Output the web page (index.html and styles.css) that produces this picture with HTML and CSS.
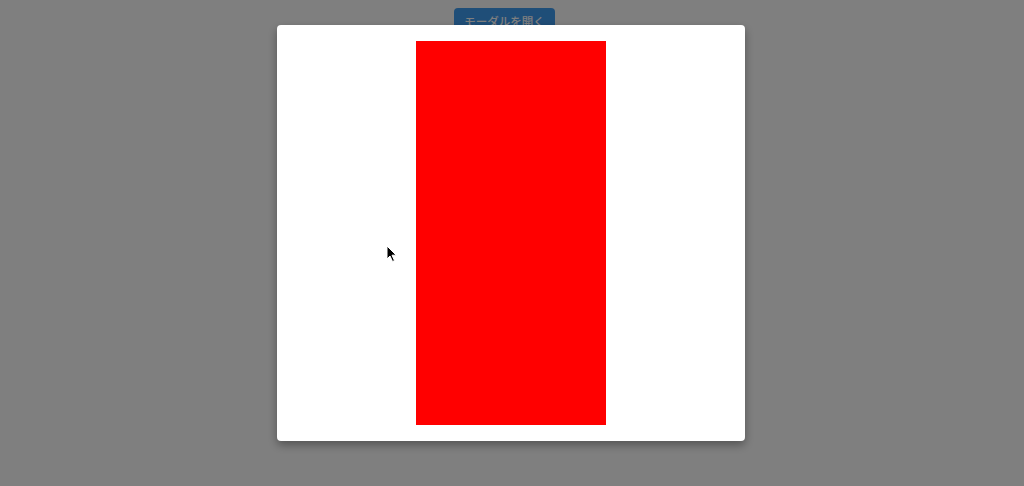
FILE: index.html
```html
<!DOCTYPE html>
<html lang="ja">
<head>
<meta charset="utf-8">
<title>Modal</title>
<link rel="stylesheet" href="styles.css">
</head>
<body>
<div class="page">
  <button class="open-btn">モーダルを開く</button>
</div>
<div class="overlay">
  <div class="modal">
    <div class="red-box"></div>
  </div>
</div>
<svg class="cursor" width="12" height="18" viewBox="0 0 12 18">
  <path d="M1 1 L1 14 L4 11 L6.5 16.5 L8.5 15.6 L6 10.2 L10.2 10.2 Z" fill="#000" stroke="#fff" stroke-width="1"/>
</svg>
</body>
</html>
```

FILE: styles.css
```css
html, body {
  margin: 0;
  padding: 0;
  height: 100%;
  background: #ffffff;
  font-family: "Noto Sans CJK JP", "Noto Sans", sans-serif;
}
.page {
  display: flex;
  justify-content: center;
  padding: 8px 15px 0 0;
}
.open-btn {
  background: #3f9cf0;
  color: #ffffff;
  border: none;
  border-radius: 4px;
  font-family: "Noto Sans CJK JP", sans-serif;
  font-size: 11.5px;
  font-weight: 500;
  padding: 4px 10px 8px;
  line-height: 18px;
  white-space: nowrap;
}
.overlay {
  position: fixed;
  inset: 0;
  background: rgba(0, 0, 0, 0.5);
  display: flex;
  justify-content: center;
  align-items: flex-start;
  padding: 25px 2px 0 0;
}
.modal {
  background: #ffffff;
  width: 468px;
  box-sizing: border-box;
  padding: 16px 0 16px;
  border-radius: 4px;
  box-shadow: 0 4px 10px rgba(0, 0, 0, 0.35);
  display: flex;
  justify-content: center;
}
.red-box {
  width: 190px;
  height: 384px;
  background: #ff0000;
}
.cursor {
  position: absolute;
  left: 386px;
  top: 245px;
}
```
